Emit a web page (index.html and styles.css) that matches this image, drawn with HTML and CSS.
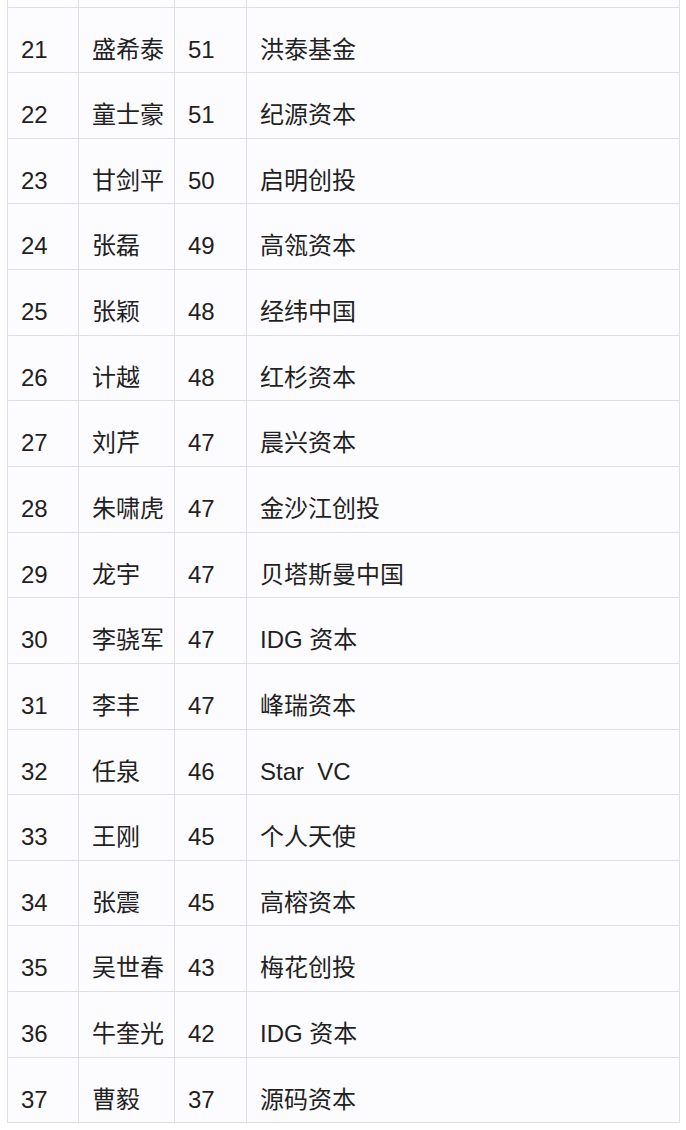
FILE: index.html
```html
<!DOCTYPE html>
<html lang="zh-CN">
<head>
<meta charset="utf-8">
<title>投资人排行</title>
<link rel="stylesheet" href="styles.css">
</head>
<body>
<table class="rank">
  <colgroup>
    <col class="c-no">
    <col class="c-name">
    <col class="c-score">
    <col class="c-org">
  </colgroup>
  <tbody>
    <tr class="stub"><td></td><td></td><td></td><td></td></tr>
    <tr><td>21</td><td>盛希泰</td><td>51</td><td>洪泰基金</td></tr>
    <tr><td>22</td><td>童士豪</td><td>51</td><td>纪源资本</td></tr>
    <tr><td>23</td><td>甘剑平</td><td>50</td><td>启明创投</td></tr>
    <tr><td>24</td><td>张磊</td><td>49</td><td>高瓴资本</td></tr>
    <tr><td>25</td><td>张颖</td><td>48</td><td>经纬中国</td></tr>
    <tr><td>26</td><td>计越</td><td>48</td><td>红杉资本</td></tr>
    <tr><td>27</td><td>刘芹</td><td>47</td><td>晨兴资本</td></tr>
    <tr><td>28</td><td>朱啸虎</td><td>47</td><td>金沙江创投</td></tr>
    <tr><td>29</td><td>龙宇</td><td>47</td><td>贝塔斯曼中国</td></tr>
    <tr><td>30</td><td>李骁军</td><td>47</td><td>IDG 资本</td></tr>
    <tr><td>31</td><td>李丰</td><td>47</td><td>峰瑞资本</td></tr>
    <tr><td>32</td><td>任泉</td><td>46</td><td>Star&nbsp; VC</td></tr>
    <tr><td>33</td><td>王刚</td><td>45</td><td>个人天使</td></tr>
    <tr><td>34</td><td>张震</td><td>45</td><td>高榕资本</td></tr>
    <tr><td>35</td><td>吴世春</td><td>43</td><td>梅花创投</td></tr>
    <tr><td>36</td><td>牛奎光</td><td>42</td><td>IDG 资本</td></tr>
    <tr><td>37</td><td>曹毅</td><td>37</td><td>源码资本</td></tr>
  </tbody>
</table>
</body>
</html>
```

FILE: styles.css
```css
html, body {
  margin: 0;
  padding: 0;
  background: #ffffff;
}

.rank {
  margin-left: 7px;
  width: 672px;
  border-collapse: collapse;
  table-layout: fixed;
  font-family: "Liberation Sans", Arial, "Noto Sans CJK SC", sans-serif;
  font-size: 24px;
  color: #1f1f24;
  background: #fcfbfd;
}

.c-no { width: 71px; }
.c-name { width: 96px; }
.c-score { width: 72px; }
.c-org { width: 433px; }

.rank td {
  border: 1px solid #dfdee2;
  height: 65.65px;
  box-sizing: border-box;
  padding: 28px 0 0 13px;
  line-height: 28px;
  vertical-align: top;
  white-space: nowrap;
}

.rank .stub td {
  border-top: none;
  height: 7px;
  padding: 0;
}
```
